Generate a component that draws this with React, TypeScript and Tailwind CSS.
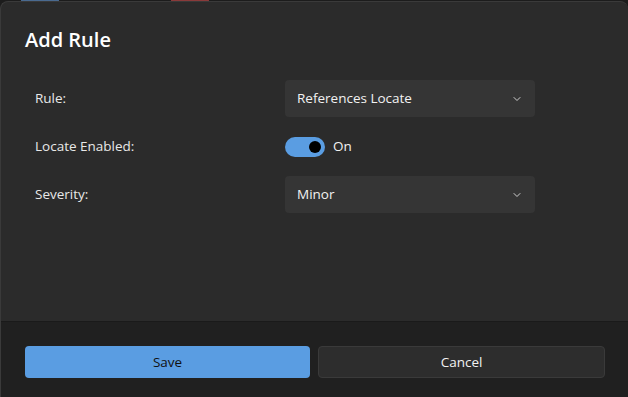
import { ChevronDown } from "lucide-react"

const font = { fontFamily: '"Open Sans", "Noto Sans", sans-serif' }

function Select({ value }: { value: string }) {
    return (
        <div className="flex h-[37px] w-[250px] items-center justify-between rounded-[4px] bg-[#353535] pl-[12px] pr-[12px] text-[13.5px] text-[#f2f2f2]">
            <span>{value}</span>
            <ChevronDown className="h-[12px] w-[12px] text-[#cfcfcf]" strokeWidth={2} />
        </div>
    )
}

export default function App() {
    return (
        <div className="flex h-[397px] w-[628px] flex-col bg-[#1c1c1c]" style={font}>
            {/* window behind peeking through */}
            <div className="flex h-[1px] shrink-0">
                <div className="ml-[21px] w-[38px] bg-[#4a6a90]" />
                <div className="ml-[112px] w-[38px] bg-[#8a3a3a]" />
            </div>

            <div className="flex flex-1 flex-col overflow-hidden rounded-t-[8px] border-l border-t border-[#3a3a3a] bg-[#2b2b2b]">
                <div className="flex-1 px-[24px] pt-[23px]">
                    <h2 className="text-[20px] font-semibold text-white">Add Rule</h2>

                    <div className="mt-[25px] flex flex-col gap-[12px] pl-[10px]">
                        <div className="flex items-center">
                            <span className="w-[250px] text-[13.5px] text-[#e8e8e8]">Rule:</span>
                            <Select value="References Locate" />
                        </div>
                        <div className="flex h-[35px] items-center">
                            <span className="w-[250px] text-[13.5px] text-[#e8e8e8]">Locate Enabled:</span>
                            <div className="flex items-center gap-[8px]">
                                <div className="flex h-[20px] w-[40px] items-center justify-end rounded-full bg-[#5a9de2] pr-[4px]">
                                    <div className="h-[12px] w-[12px] rounded-full bg-black" />
                                </div>
                                <span className="text-[13.5px] text-[#f2f2f2]">On</span>
                            </div>
                        </div>
                        <div className="flex items-center">
                            <span className="w-[250px] text-[13.5px] text-[#e8e8e8]">Severity:</span>
                            <Select value="Minor" />
                        </div>
                    </div>
                </div>

                <div className="flex h-[76px] shrink-0 items-start gap-[8px] border-t border-[#1a1a1a] bg-[#202020] pl-[24px] pr-[23px] pt-[24px]">
                    <button className="h-[32px] flex-1 rounded-[4px] bg-[#5a9de2] text-[13.5px] text-[#111]">
                        Save
                    </button>
                    <button className="h-[32px] flex-1 rounded-[4px] border border-[#3a3a3a] bg-[#2d2d2d] text-[13.5px] text-[#f2f2f2]">
                        Cancel
                    </button>
                </div>
            </div>
        </div>
    )
}
